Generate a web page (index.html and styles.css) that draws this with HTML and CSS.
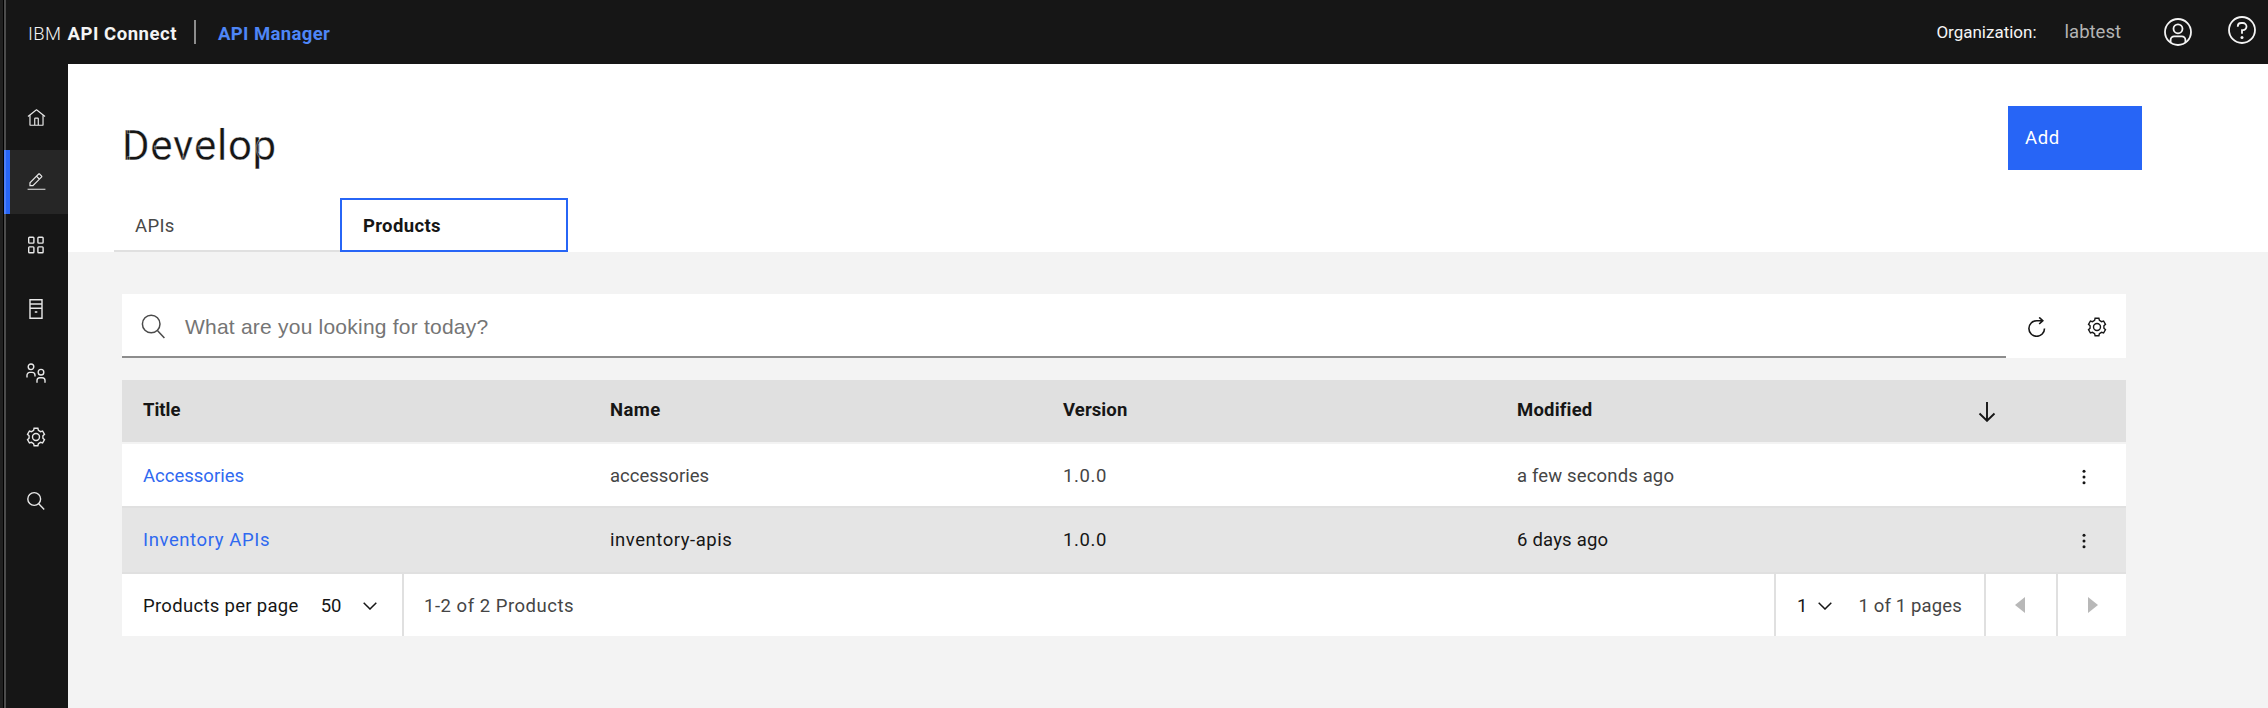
FILE: index.html
```html
<!DOCTYPE html>
<html lang="en">
<head>
<meta charset="utf-8">
<title>API Manager</title>
<link rel="stylesheet" href="styles.css">
</head>
<body>
<div class="app">
  <div class="edge"><i class="edge-a"></i><i class="edge-b"></i><i class="edge-c"></i></div>
  <div class="shell">
    <header class="topbar">
      <span class="brand t-ibm">IBM</span>
      <span class="brand t-connect">API Connect</span>
      <i class="brand-rule"></i>
      <a class="brand t-manager">API Manager</a>
      <span class="spacer"></span>
      <span class="t-org">Organization:</span>
      <span class="t-lab">labtest</span>
      <svg class="ic-user" viewBox="0 0 28 28"><circle cx="14" cy="14" r="13"/><circle cx="14" cy="10.8" r="4.5"/><path d="M6.6 24.2v-2.2a3.6 3.6 0 0 1 3.6-3.6h7.6a3.6 3.6 0 0 1 3.6 3.6v2.2"/></svg>
      <svg class="ic-help" viewBox="0 0 28 28"><circle cx="14" cy="14" r="13"/><path d="M9.8 10.8v-.6a3.3 3.3 0 0 1 3.3-3.2h1.8a3.6 3.6 0 0 1 0 7.2h-.9v3.6"/><circle class="dot" cx="14" cy="21.4" r="1.5"/></svg>
    </header>
    <div class="body">
      <nav class="side">
        <a class="side-item"><svg viewBox="0 0 32 32"><path d="M16.6 2.2a1 1 0 0 0-1.2 0L1 13.4l1.2 1.6L4 13.6V28a2 2 0 0 0 2 2h20a2 2 0 0 0 2-2V13.6l1.8 1.4 1.2-1.6ZM18 28h-4V18h4Zm2 0V18a2 2 0 0 0-2-2h-4a2 2 0 0 0-2 2v10H6V12.1l10-7.8 10 7.8V28Z"/></svg></a>
        <a class="side-item active"><svg viewBox="0 0 32 32"><path d="M1 28h30v2H1zM25.4 9c.8-.8.8-2 0-2.8l-3.6-3.6c-.8-.8-2-.8-2.8 0l-15 15V24h6.4zM20.4 4 24 7.6l-3 3L17.4 7zM6 22v-3.6l10-10 3.6 3.6-10 10z"/></svg></a>
        <a class="side-item"><svg class="line" viewBox="0 0 18 18"><rect x="1.7" y="1.3" width="5.2" height="5.8" rx=".8"/><rect x="10.9" y="1.3" width="5.2" height="5.8" rx=".8"/><rect x="1.7" y="10.9" width="5.2" height="5.8" rx=".8"/><rect x="10.9" y="10.9" width="5.2" height="5.8" rx=".8"/></svg></a>
        <a class="side-item"><svg class="line server" viewBox="0 0 18 20"><path d="M3 .8h12v18.4H3zM3 5h12M3 9.2h12M7.8 13h2.5"/></svg></a>
        <a class="side-item"><svg class="line people" viewBox="0 0 20 20"><circle cx="5" cy="3.8" r="2.8"/><path d="M1 14.5v-2.3a2.8 2.8 0 0 1 2.8-2.8h2.4A2.8 2.8 0 0 1 9 12.2v1.2"/><circle cx="15" cy="9.2" r="2.8"/><path d="M11 19.8v-2.2a2.8 2.8 0 0 1 2.8-2.8h2.4a2.8 2.8 0 0 1 2.8 2.8v2.2"/></svg></a>
        <a class="side-item"><svg class="line gear" viewBox="-10 -10 20 20"><path d="M-2.4-6.6-1.9-8.7H1.9L2.4-6.6 4.52-5.38 6.58-6 8.48-2.7 6.92-1.22V1.22L8.48 2.7 6.58 6 4.52 5.38 2.4 6.6 1.9 8.7H-1.9L-2.4 6.6-4.52 5.38-6.58 6-8.48 2.7-6.92 1.22V-1.22L-8.48-2.7-6.58-6-4.52-5.38Z"/><circle r="3.5"/></svg></a>
        <a class="side-item"><svg class="line" viewBox="0 0 18 18"><circle cx="7.2" cy="7" r="6.4"/><path d="m11.7 11.7 5.5 5.7"/></svg></a>
      </nav>
      <main class="main">
        <section class="head">
          <div class="head-row"><h1>Develop</h1><button class="add">Add</button></div>
          <div class="tabs"><a class="tab">APIs</a><a class="tab on">Products</a></div>
        </section>
        <section class="content">
          <div class="search">
            <div class="field"><svg viewBox="0 0 24 25"><circle cx="10.2" cy="10" r="8.8"/><path d="m16.4 16.5 7 7.5"/></svg><span class="t-place">What are you looking for today?</span></div>
            <svg class="refresh" viewBox="0 0 18 20"><path d="M16.5 11.5A7.8 7.8 0 1 1 8.7 3.7h6M11.2.4l3.6 3.3L11.2 7"/></svg>
            <svg class="gear dark" viewBox="-10 -10 20 20"><path d="M-2.4-6.6-1.9-8.7H1.9L2.4-6.6 4.52-5.38 6.58-6 8.48-2.7 6.92-1.22V1.22L8.48 2.7 6.58 6 4.52 5.38 2.4 6.6 1.9 8.7H-1.9L-2.4 6.6-4.52 5.38-6.58 6-8.48 2.7-6.92 1.22V-1.22L-8.48-2.7-6.58-6-4.52-5.38Z"/><circle r="3.5"/></svg>
          </div>
          <div class="table">
            <div class="row th"><span>Title</span><span class="t-name">Name</span><span class="t-ver">Version</span><span class="t-mod">Modified</span><svg class="sort" viewBox="0 0 18 20"><path d="M9 0v19M1.5 11.5 9 18.8l7.5-7.3"/></svg></div>
            <div class="row r1"><a>Accessories</a><span>accessories</span><span class="t-v">1.0.0</span><span class="t-few">a few seconds ago</span><svg class="menu" viewBox="0 0 4 16"><circle cx="2" cy="2.3" r="1.5"/><circle cx="2" cy="8" r="1.5"/><circle cx="2" cy="13.7" r="1.5"/></svg></div>
            <div class="row r2"><a class="t-inv">Inventory APIs</a><span class="t-inv2">inventory-apis</span><span class="t-v">1.0.0</span><span class="t-days">6 days ago</span><svg class="menu" viewBox="0 0 4 16"><circle cx="2" cy="2.3" r="1.5"/><circle cx="2" cy="8" r="1.5"/><circle cx="2" cy="13.7" r="1.5"/></svg></div>
          </div>
          <footer class="pager">
            <div class="per"><span class="t-per">Products per page</span><span class="t-50">50</span><svg class="chev" viewBox="0 0 14 8"><path d="m.7.7 6.3 6.3L13.3.7"/></svg></div>
            <span class="t-range">1-2 of 2 Products</span>
            <div class="page"><span>1</span><svg class="chev" viewBox="0 0 14 8"><path d="m.7.7 6.3 6.3L13.3.7"/></svg><span class="t-pages">1 of 1 pages</span></div>
            <div class="prev"><svg viewBox="0 0 10 16"><path d="M10 0v16L0 8z"/></svg></div>
            <div class="next"><svg viewBox="0 0 10 16"><path d="M0 0v16l10-8z"/></svg></div>
          </footer>
        </section>
      </main>
    </div>
  </div>
</div>
</body>
</html>
```
FILE: styles.css
```css
* { box-sizing: border-box; }
body { margin: 0; width: 2268px; height: 708px; overflow: hidden; font-family: Roboto, "Liberation Sans", sans-serif; font-size: 18.5px; color: #161616; }
svg { display: block; fill: none; flex: none; }
span, a, h1, button { white-space: nowrap; }
.app { display: flex; height: 708px; background: #161616; }
.edge { width: 6px; display: flex; }
.edge-a { width: 3px; background: #202020; }
.edge-b { width: 1px; background: #000; }
.edge-c { width: 2px; background: #4c4c4c; }
.shell { flex: 1; display: flex; flex-direction: column; }
.topbar { height: 64px; display: flex; align-items: center; color: #f4f4f4; padding: 0 12px 0 22px; }
.brand { padding-top: 4px; }
.t-ibm { font-weight: 300; letter-spacing: .4px; width: 39.5px; }
.t-connect { font-weight: 700; letter-spacing: .54px; width: 126.5px; }
.brand-rule { width: 2px; height: 24px; background: #8d8d8d; margin: 0 22px 0 0; }
.t-manager { font-weight: 700; letter-spacing: .38px; color: #4e86f7; }
.spacer { flex: 1; }
.t-org { font-size: 17px; margin-right: 28px; }
.t-lab { color: #b4b4b4; margin-right: 43px; }
.ic-user, .ic-help { width: 28px; height: 28px; stroke: #f4f4f4; stroke-width: 1.8; }
.ic-user { margin-right: 36px; }
.ic-help { margin-bottom: 4px; }
.ic-help .dot { fill: #f4f4f4; stroke: none; }
.body { flex: 1; display: flex; }
.side { width: 62px; padding-top: 22px; }
.side-item { height: 64px; display: flex; align-items: center; justify-content: center; padding: 0 2px 2px 0; }
.side-item svg { width: 19px; height: 19px; fill: #e8e8e8; overflow: visible; }
.side-item svg.line { width: 18px; height: 18px; fill: none; stroke: #e8e8e8; stroke-width: 1.4; }
.side-item svg.gear, .side-item svg.people { width: 20px; height: 20px; }
.side-item svg.server { height: 20px; }
.active { background: #262626; box-shadow: -2px 0 0 #4d7ff8, inset 4px 0 0 #2765f6; }
.main { flex: 1; background: #f3f3f3; }
.head { height: 188px; background: #fff; display: flex; flex-direction: column; justify-content: space-between; }
.head-row { display: flex; justify-content: space-between; padding: 42px 126px 0 54px; }
h1 { margin: 13px 0 0; font-size: 42px; line-height: 54px; font-weight: 400; letter-spacing: .75px; -webkit-text-stroke: .3px #fff; }
.add { width: 134px; height: 64px; border: 0; background: #2765f6; color: #fff; font: inherit; letter-spacing: .6px; text-align: left; padding: 0 0 0 17px; }
.tabs { display: flex; padding-left: 46px; }
.tab { width: 226px; height: 54px; display: flex; align-items: center; padding: 3px 0 0 21px; border-bottom: 2px solid #e0e0e0; color: #484848; letter-spacing: .35px; }
.tab.on { width: 228px; border: 2px solid #2765f6; padding-top: 1px; color: #161616; font-weight: 700; }
.content { padding: 42px 142px 0 54px; }
.search { height: 64px; background: #fff; display: flex; align-items: center; }
.field { width: 1884px; height: 64px; border-bottom: 2px solid #8d8d8d; display: flex; align-items: center; padding: 2px 0 0 19px; }
.field svg { width: 24px; height: 25px; stroke: #4a4a4a; stroke-width: 1.5; }
.t-place { font-family: "Liberation Sans", Arial, sans-serif; font-size: 21px; letter-spacing: .22px; color: #757575; margin: 1px 0 0 20px; }
.refresh { width: 18px; height: 20px; margin: 2px 0 0 22px; stroke: #161616; stroke-width: 1.6; }
.gear.dark { width: 20px; height: 20px; margin: 1px 0 0 41px; stroke: #161616; stroke-width: 1.4; }
.table { margin-top: 22px; }
.row { display: grid; grid-template-columns: 467px 453px 454px 461px 1fr; align-items: center; padding: 2px 0 0 21px; height: 64px; }
.th { background: #e0e0e0; border-bottom: 2px solid #f3f3f3; font-weight: 700; padding-top: 0; }
.th span { padding-bottom: 3px; }
.sort { width: 18px; height: 20px; margin-top: 2px; stroke: #161616; stroke-width: 1.9; }
.t-name { letter-spacing: .4px; }
.t-ver { letter-spacing: .1px; }
.t-mod { letter-spacing: .2px; }
.t-v, .t-inv { letter-spacing: .6px; }
.t-few { letter-spacing: .15px; }
.t-inv2 { letter-spacing: .54px; }
.t-days { letter-spacing: .2px; }
.row .menu { width: 4px; height: 16px; fill: #161616; justify-self: end; margin: 2px 40px 0 0; }
.r1 { background: #fff; color: #454545; border-bottom: 2px solid #e0e0e0; }
.r2 { background: #e5e5e5; height: 66px; border-bottom: 2px solid #e0e0e0; padding-top: 0; }
.row a { color: #2f69f0; }
.pager { height: 62px; background: #fff; display: flex; align-items: center; }
.pager > div { height: 62px; display: flex; align-items: center; }
.pager span { padding-top: 2px; }
.per { width: 282px; border-right: 2px solid #e0e0e0; padding-left: 21px; }
.t-per { letter-spacing: .3px; }
.t-50 { margin-left: 22px; }
.chev { width: 14px; height: 8px; stroke: #161616; stroke-width: 1.5; margin: 2px 0 0 22px; }
.t-range { flex: 1; margin-left: 20px; color: #454545; letter-spacing: .52px; }
.page { width: 212px; border: solid #e0e0e0; border-width: 0 2px; padding-left: 21px; }
.page .chev { margin-left: 11px; }
.t-pages { margin-left: 26px; color: #454545; letter-spacing: .15px; }
.prev, .next { justify-content: center; }
.prev { width: 72px; border-right: 2px solid #e0e0e0; }
.prev svg { margin-right: 2px; }
.next { width: 68px; padding-left: 1px; }
.prev svg, .next svg { width: 10px; height: 16px; fill: #b8b8b8; }
```
